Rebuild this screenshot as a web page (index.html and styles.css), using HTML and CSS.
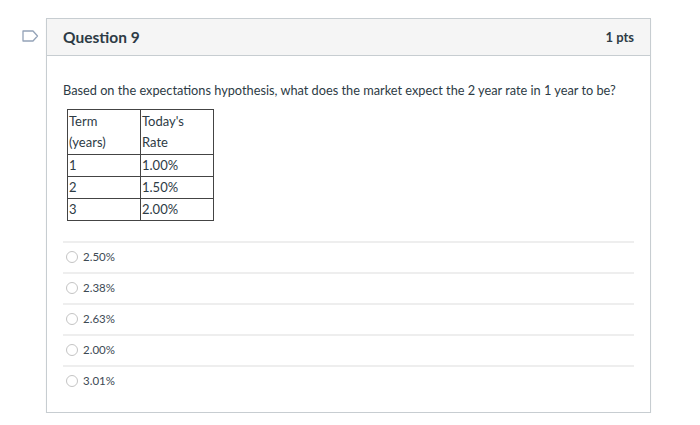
FILE: index.html
```html
<!DOCTYPE html>
<html>
<head>
<meta charset="utf-8">
<link rel="stylesheet" href="styles.css">
</head>
<body>
<div class="page">
  <div class="flag">
    <svg width="17" height="12" viewBox="0 0 17 12"><path d="M1 1 H11 L15.5 6 L11 11 H1 Z" fill="none" stroke="#94a3b8" stroke-width="1.3" stroke-linejoin="round"/></svg>
  </div>
  <div class="card">
    <div class="card-header">
      <span class="title">Question 9</span>
      <span class="pts">1 pts</span>
    </div>
    <div class="card-body">
      <p class="question">Based on the expectations hypothesis, what does the market expect the 2 year rate in 1 year to be?</p>
      <table class="rates">
        <tr><td class="c1">Term<br>(years)</td><td class="c2">Today's<br>Rate</td></tr>
        <tr><td class="c1">1</td><td class="c2">1.00%</td></tr>
        <tr><td class="c1">2</td><td class="c2">1.50%</td></tr>
        <tr><td class="c1">3</td><td class="c2">2.00%</td></tr>
      </table>
      <div class="answers">
        <div class="answer"><span class="radio"></span><span class="label">2.50%</span></div>
        <div class="answer"><span class="radio"></span><span class="label">2.38%</span></div>
        <div class="answer"><span class="radio"></span><span class="label">2.63%</span></div>
        <div class="answer"><span class="radio"></span><span class="label">2.00%</span></div>
        <div class="answer"><span class="radio"></span><span class="label">3.01%</span></div>
      </div>
    </div>
  </div>
</div>
</body>
</html>
```
FILE: styles.css
```css
html, body {
  margin: 0;
  padding: 0;
  background: #fff;
}
body {
  font-family: Lato, "Liberation Sans", sans-serif;
  color: #2d3b45;
}
.page {
  display: flex;
  align-items: flex-start;
  padding: 18px 0 0 22px;
}
.flag {
  width: 24px;
  padding-top: 12px;
  line-height: 0;
}
.card {
  width: 603px;
  height: 393px;
  border: 1px solid #c7cdd1;
  box-shadow: 0 1px 1px rgba(0,0,0,0.08);
}
.card-header {
  height: 36px;
  background: #f5f5f5;
  border-bottom: 1px solid #c7cdd1;
  display: flex;
  align-items: center;
  justify-content: space-between;
  padding: 0 16px 1px 16px;
  box-sizing: border-box;
  height: 37px;
}
.title {
  font-weight: 700;
  font-size: 15.5px;
  color: #2d3b45;
}
.pts {
  font-weight: 700;
  font-size: 13px;
  color: #2d3b45;
}
.card-body {
  padding: 0 16px 0 16px;
}
.question {
  margin: 25px 0 0 0;
  font-size: 12.75px;
  line-height: 18px;
  color: #2d3b45;
}
.rates {
  border-collapse: collapse;
  margin: 10px 0 0 4px;
  font-size: 13px;
  color: #2d3b45;
}
.rates td {
  border: 1px solid #444;
  padding: 0 2px 0 1px;
  line-height: 21px;
  vertical-align: top;
}
.rates tr:first-child td {
  padding-top: 1px;
  padding-bottom: 1px;
}
.rates .c1 { width: 69px; }
.rates .c2 { width: 69px; }
.answers {
  margin-top: 20px;
}
.answer {
  border-top: 2px solid #eeeeee;
  height: 29px;
  display: flex;
  align-items: center;
  padding-left: 4px;
}
.radio {
  width: 10px;
  height: 10px;
  border: 1px solid #c4c4c4;
  border-radius: 50%;
  margin-right: 5px;
  margin-left: -1px;
  margin-top: -2px;
}
.label {
  font-size: 11.5px;
  color: #3d4a54;
  margin-top: -2px;
}
```
